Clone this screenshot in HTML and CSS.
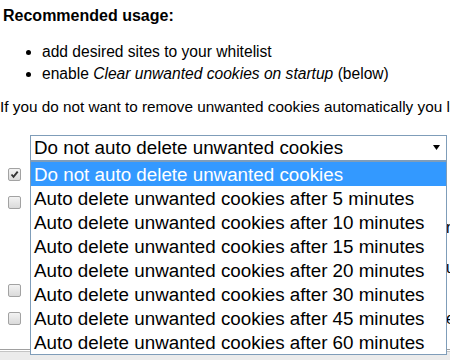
FILE: index.html
```html
<!DOCTYPE html>
<html lang="en">
<head>
    <meta charset="UTF-8">
    <title>Cookie Options</title>
    <link rel="stylesheet" href="styles.css">
</head>
<body>
    <div class="page">
        <h3 class="title">Recommended usage:</h3>
        <ul class="tips">
            <li>add desired sites to your whitelist</li>
            <li>enable <em>Clear unwanted cookies on startup</em> (below)</li>
        </ul>
        <p class="note">If you do not want to remove unwanted cookies automatically you leave this option as it is.</p>

        <div class="picker">
            <div class="select">
                <span>Do not auto delete unwanted cookies</span>
                <svg class="arrow" width="7" height="5" viewBox="0 0 7 5"><polygon points="0,0 7,0 3.5,5" fill="#000"/></svg>
            </div>
            <ul class="menu">
                <li class="selected">Do not auto delete unwanted cookies</li>
                <li>Auto delete unwanted cookies after 5 minutes</li>
                <li>Auto delete unwanted cookies after 10 minutes</li>
                <li>Auto delete unwanted cookies after 15 minutes</li>
                <li>Auto delete unwanted cookies after 20 minutes</li>
                <li>Auto delete unwanted cookies after 30 minutes</li>
                <li>Auto delete unwanted cookies after 45 minutes</li>
                <li>Auto delete unwanted cookies after 60 minutes</li>
            </ul>
        </div>

        <div class="options">
            <label class="option">
                <span class="box">
                    <svg width="11" height="11" viewBox="0 0 11 11"><path d="M2.5 5.5 L4.5 7.8 L8.7 2.6" fill="none" stroke="#333" stroke-width="1.9"/></svg>
                </span>
                <span>Show icon in the toolbar</span>
            </label>
            <label class="option">
                <span class="box"></span>
                <span>Clear unwanted cookies on startup</span>
            </label>
            <div class="desc">
                <p>Cookies of sites that are not whitelisted will be removed when the browser starts again</p>
                <p>Please remember to keep your whitelist up to date before you enable this option</p>
            </div>
            <label class="option">
                <span class="box"></span>
                <span>Show notifications</span>
            </label>
            <label class="option">
                <span class="box"></span>
                <span>Log removed cookies to the console for debugging and / or review</span>
            </label>
        </div>

        <div class="rule"></div>
        <div class="statusbar"></div>
    </div>
</body>
</html>
```

FILE: styles.css
```css
html, body {
    margin: 0;
    height: 360px;
    overflow: hidden;
}
body {
    font-family: "Liberation Sans", Arial, sans-serif;
    color: #000000;
    background: #ffffff;
}
.title {
    margin: 7px 0 0 3px;
    font-size: 16px;
    line-height: 18px;
    font-weight: bold;
}
.tips {
    margin: 15.6px 0 11px;
    padding-left: 42px;
    font-size: 15.6px;
    line-height: 22px;
}
.note {
    margin: 0;
    font-size: 15.3px;
    line-height: 22px;
    white-space: nowrap;
}
/* Select box with its open list */
.picker {
    position: relative;
    width: 417px;
    margin: 17px 0 0 30px;
    font-size: 18.8px;
}
.select {
    box-sizing: border-box;
    height: 26px;
    border: 1px solid #7f9db9;
    padding: 0 6px 0 3px;
    line-height: 24px;
    display: flex;
    justify-content: space-between;
    align-items: center;
    white-space: nowrap;
}
.menu {
    position: absolute;
    top: 100%;
    left: 0;
    right: 0;
    z-index: 1;
    margin: 0;
    padding: 0;
    list-style: none;
    background: #ffffff;
    border: 1px solid #7f9db9;
}
.menu li {
    height: 24px;
    line-height: 25px;
    padding-left: 3px;
    white-space: nowrap;
}
.menu li.selected {
    background: #3399ff;
    color: #ffffff;
}
/* Checkbox rows, mostly covered by the list */
.option {
    display: flex;
    align-items: center;
    gap: 9px;
    height: 28px;
    padding-left: 8px;
    font-size: 15.6px;
    white-space: nowrap;
}
.box {
    flex-shrink: 0;
    box-sizing: border-box;
    width: 13px;
    height: 13px;
    border: 1px solid #a2a2a2;
    border-radius: 2px;
    background: linear-gradient(#f3f3f3, #dadada);
    display: flex;
    align-items: center;
    justify-content: center;
}
.desc {
    height: 60px;
    padding-left: 30px;
    font-size: 15.6px;
    white-space: nowrap;
}
.desc p {
    margin: 0 0 18px;
    line-height: 22px;
}
.rule {
    margin-top: 16px;
    border-top: 1px solid #a0a0a0;
}
.statusbar {
    margin-top: 1px;
    height: 20px;
    border-top: 1px solid #c4c4c4;
    background: #ebebeb;
}
```
